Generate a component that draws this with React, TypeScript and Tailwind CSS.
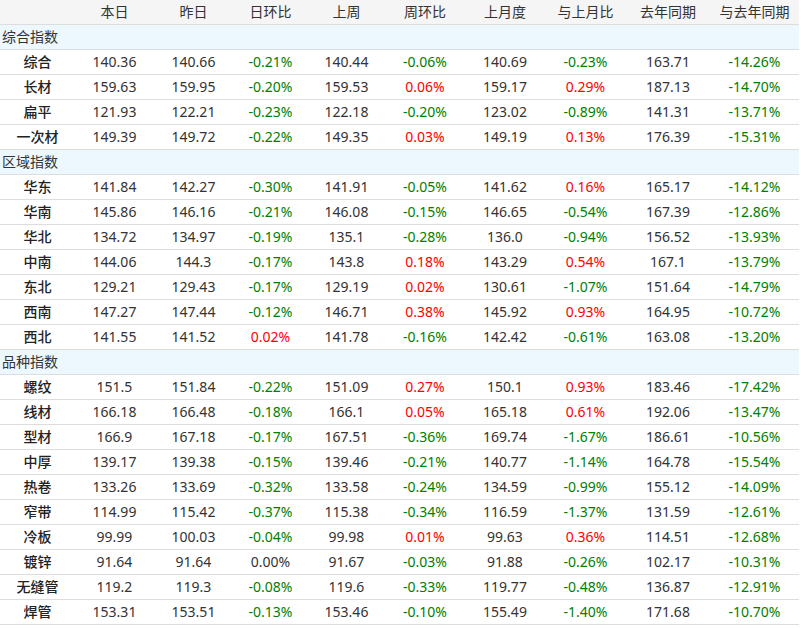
import React from "react";

type Row = [string, ...string[]];

// column order: 本日, 昨日, 日环比, 上周, 周环比, 上月度, 与上月比, 去年同期, 与去年同期
const headers = ["", "本日", "昨日", "日环比", "上周", "周环比", "上月度", "与上月比", "去年同期", "与去年同期"];

const sections: { title: string; rows: Row[] }[] = [
  {
    title: "综合指数",
    rows: [
      ["综合", "140.36", "140.66", "-0.21%", "140.44", "-0.06%", "140.69", "-0.23%", "163.71", "-14.26%"],
      ["长材", "159.63", "159.95", "-0.20%", "159.53", "0.06%", "159.17", "0.29%", "187.13", "-14.70%"],
      ["扁平", "121.93", "122.21", "-0.23%", "122.18", "-0.20%", "123.02", "-0.89%", "141.31", "-13.71%"],
      ["一次材", "149.39", "149.72", "-0.22%", "149.35", "0.03%", "149.19", "0.13%", "176.39", "-15.31%"],
    ],
  },
  {
    title: "区域指数",
    rows: [
      ["华东", "141.84", "142.27", "-0.30%", "141.91", "-0.05%", "141.62", "0.16%", "165.17", "-14.12%"],
      ["华南", "145.86", "146.16", "-0.21%", "146.08", "-0.15%", "146.65", "-0.54%", "167.39", "-12.86%"],
      ["华北", "134.72", "134.97", "-0.19%", "135.1", "-0.28%", "136.0", "-0.94%", "156.52", "-13.93%"],
      ["中南", "144.06", "144.3", "-0.17%", "143.8", "0.18%", "143.29", "0.54%", "167.1", "-13.79%"],
      ["东北", "129.21", "129.43", "-0.17%", "129.19", "0.02%", "130.61", "-1.07%", "151.64", "-14.79%"],
      ["西南", "147.27", "147.44", "-0.12%", "146.71", "0.38%", "145.92", "0.93%", "164.95", "-10.72%"],
      ["西北", "141.55", "141.52", "0.02%", "141.78", "-0.16%", "142.42", "-0.61%", "163.08", "-13.20%"],
    ],
  },
  {
    title: "品种指数",
    rows: [
      ["螺纹", "151.5", "151.84", "-0.22%", "151.09", "0.27%", "150.1", "0.93%", "183.46", "-17.42%"],
      ["线材", "166.18", "166.48", "-0.18%", "166.1", "0.05%", "165.18", "0.61%", "192.06", "-13.47%"],
      ["型材", "166.9", "167.18", "-0.17%", "167.51", "-0.36%", "169.74", "-1.67%", "186.61", "-10.56%"],
      ["中厚", "139.17", "139.38", "-0.15%", "139.46", "-0.21%", "140.77", "-1.14%", "164.78", "-15.54%"],
      ["热卷", "133.26", "133.69", "-0.32%", "133.58", "-0.24%", "134.59", "-0.99%", "155.12", "-14.09%"],
      ["窄带", "114.99", "115.42", "-0.37%", "115.38", "-0.34%", "116.59", "-1.37%", "131.59", "-12.61%"],
      ["冷板", "99.99", "100.03", "-0.04%", "99.98", "0.01%", "99.63", "0.36%", "114.51", "-12.68%"],
      ["镀锌", "91.64", "91.64", "0.00%", "91.67", "-0.03%", "91.88", "-0.26%", "102.17", "-10.31%"],
      ["无缝管", "119.2", "119.3", "-0.08%", "119.6", "-0.33%", "119.77", "-0.48%", "136.87", "-12.91%"],
      ["焊管", "153.31", "153.51", "-0.13%", "153.46", "-0.10%", "155.49", "-1.40%", "171.68", "-10.70%"],
    ],
  },
];

const grid =
  "grid grid-cols-[75px_79px_79px_75px_77px_80px_80px_81px_84px_89px] h-[25px] border-b border-[#dddddd] items-center";

// percent columns: 日环比, 周环比, 与上月比, 与去年同期
const pctCols = [3, 5, 7, 9];

function pctColor(v: string) {
  if (v.startsWith("-")) return "text-[#008000]";
  if (v === "0.00%") return "text-[#333333]";
  return "text-[#ff0000]";
}

export default function App() {
  return (
    <div
      className="w-[801px] h-[629px] bg-white text-[14px] text-[#333333] leading-none"
      style={{ fontFamily: '"Noto Sans", "Noto Sans CJK SC", sans-serif' }}
    >
      <div className="w-[799px]">
        {/* header */}
        <div className={`${grid} bg-[#f5f5f5]`}>
          {headers.map((h, i) => (
            <div key={i} className="text-center">
              {h}
            </div>
          ))}
        </div>

        {sections.map((s) => (
          <React.Fragment key={s.title}>
            <div className="h-[25px] border-b border-[#dddddd] bg-[#edf7fe] flex items-center pl-[2px]">
              {s.title}
            </div>
            {s.rows.map((r) => (
              <div key={r[0]} className={grid}>
                {r.map((c, i) => (
                  <div
                    key={i}
                    className={
                      "text-center " +
                      (i === 0 ? "font-medium text-[#222222] " : "") +
                      (pctCols.includes(i) ? pctColor(c) : "")
                    }
                  >
                    {c}
                  </div>
                ))}
              </div>
            ))}
          </React.Fragment>
        ))}
      </div>
    </div>
  );
}
